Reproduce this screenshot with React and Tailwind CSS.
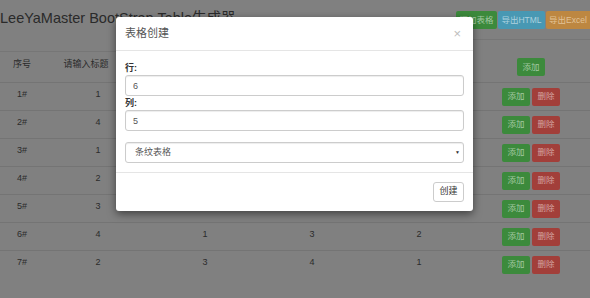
import React from "react";

const rows = [
  ["1#", 1, 2, 3, 4],
  ["2#", 4, 3, 2, 1],
  ["3#", 1, 4, 2, 3],
  ["4#", 2, 1, 4, 3],
  ["5#", 3, 2, 1, 4],
  ["6#", 4, 1, 3, 2],
  ["7#", 2, 3, 4, 1],
];

const cols = "grid grid-cols-[44px_108px_106px_108px_106px_118px]";

const AddBtn = () => (
  <button className="w-[28px] h-[18px] rounded-[2px] bg-[#3c8a3c] text-[#a3c9a3] text-[8.5px] leading-none">
    添加
  </button>
);

const DelBtn = () => (
  <button className="w-[28px] h-[18px] rounded-[2px] bg-[#a23f3a] text-[#d3a3a0] text-[8.5px] leading-none">
    删除
  </button>
);

const App = () => {
  return (
    <div
      className="relative w-[590px] h-[298px] overflow-hidden bg-[#808080] text-[#2b2b2b]"
      style={{ fontFamily: '"Liberation Sans", "Noto Sans CJK SC", sans-serif' }}
    >
      {/* page header */}
      <div className="flex">
        <div className="flex-1 h-[52px] border-b border-[#767676]">
          <h1 className="pt-[10px] text-[14.5px] leading-[16px] font-normal text-[#2a2a2a]">
            LeeYaMaster BootStrap Table生成器
          </h1>
        </div>
        <div className="w-[200px] h-[40px] border-b border-[#767676] flex justify-end items-start pt-[11px] gap-[1px]">
          <button className="w-[41px] h-[18px] rounded-[2px] bg-[#3c8a3c] text-[#a3c9a3] text-[8.5px] leading-none">
            添加表格
          </button>
          <button className="w-[47px] h-[18px] rounded-[2px] bg-[#4898b3] text-[#add2df] text-[8.5px] leading-none">
            导出HTML
          </button>
          <button className="w-[44px] h-[18px] rounded-l-[2px] bg-[#bd8741] text-[#e2c397] text-[8.5px] leading-none">
            导出Excel
          </button>
        </div>
      </div>

      {/* table */}
      <div className="text-[9px]">
        <div className={`${cols} h-[30px] items-center`}>
          <div className="text-center pb-[4px]">序号</div>
          <div className="text-center pb-[4px] pr-[24px]">请输入标题</div>
          <div className="text-center pb-[4px]">请输入标题</div>
          <div className="text-center pb-[4px]">请输入标题</div>
          <div className="text-center pb-[4px]">请输入标题</div>
          <div className="flex justify-center">
            <AddBtn />
          </div>
        </div>
        {rows.map((r) => (
          <div
            key={r[0]}
            className={`${cols} h-[28px] items-center border-t border-[#747474]`}
          >
            {r.map((v, j) => (
              <div key={j} className="text-center pb-[4px]">
                {v}
              </div>
            ))}
            <div className="flex justify-center gap-[2px]">
              <AddBtn />
              <DelBtn />
            </div>
          </div>
        ))}
      </div>

      {/* modal */}
      <div className="absolute left-[116px] top-[17px] w-[357px] h-[194px] bg-white rounded-[3px] shadow-[0_3px_9px_rgba(0,0,0,0.5)] flex flex-col text-[#333]">
        <div className="h-[34px] shrink-0 border-b border-[#e5e5e5] flex items-center justify-between px-[9px]">
          <span className="text-[11px] text-[#555]">表格创建</span>
          <span className="text-[13px] text-[#bdbdbd] leading-none pr-[3px]">×</span>
        </div>
        <div className="px-[9px] pt-[10px] pb-[9px] flex flex-col border-b border-[#e5e5e5]">
          <label className="h-[14px] leading-[14px] text-[9px] font-bold">行:</label>
          <input
            readOnly
            defaultValue="6"
            className="block h-[21px] border border-[#ccc] rounded-[3px] px-[7px] text-[9px] text-[#555] shadow-[inset_0_1px_1px_rgba(0,0,0,0.075)] outline-none"
          />
          <label className="h-[14px] leading-[14px] text-[9px] font-bold">列:</label>
          <input
            readOnly
            defaultValue="5"
            className="block h-[21px] border border-[#ccc] rounded-[3px] px-[7px] text-[9px] text-[#555] shadow-[inset_0_1px_1px_rgba(0,0,0,0.075)] outline-none"
          />
          <div className="relative mt-[11px] h-[21px]">
            <select className="block w-full h-[21px] appearance-none border border-[#ccc] rounded-[3px] pl-[9px] text-[9px] text-[#555] bg-white shadow-[inset_0_1px_1px_rgba(0,0,0,0.075)] outline-none">
              <option>条纹表格</option>
            </select>
            <span className="absolute right-[4px] top-[8px] text-[5px] leading-none text-[#333]">▼</span>
          </div>
        </div>
        <div className="flex-1 flex items-center justify-end px-[9px]">
          <button className="w-[31px] h-[20px] border border-[#ccc] rounded-[3px] bg-white text-[9px] text-[#333]">
            创建
          </button>
        </div>
      </div>
    </div>
  );
};

export default App;
